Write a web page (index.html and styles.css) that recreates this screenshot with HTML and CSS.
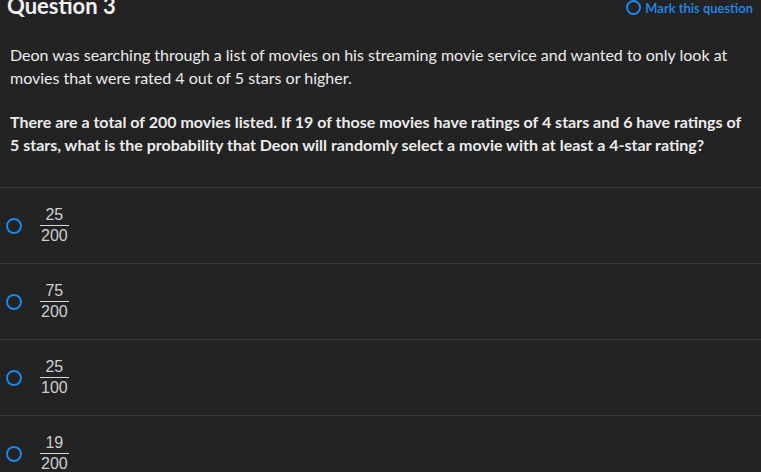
FILE: index.html
```html
<!DOCTYPE html>
<html>
<head>
<meta charset="utf-8">
<link rel="stylesheet" href="styles.css">
</head>
<body>
<div class="page">
  <header class="head">
    <h1 class="title">Question 3</h1>
    <a class="mark"><span class="mark-ring"></span>Mark this question</a>
  </header>
  <div class="stem">
    <p class="intro">Deon was searching through a list of movies on his streaming movie service and wanted to only look at movies that were rated 4 out of 5 stars or higher.</p>
    <p class="ask">There are a total of 200 movies listed. If 19 of those movies have ratings of 4 stars and 6 have ratings of 5 stars, what is the probability that Deon will randomly select a movie with at least a 4-star rating?</p>
  </div>
  <ul class="options">
    <li class="option"><span class="radio"></span><span class="frac"><span class="num">25</span><span class="den">200</span></span></li>
    <li class="option"><span class="radio"></span><span class="frac"><span class="num">75</span><span class="den">200</span></span></li>
    <li class="option"><span class="radio"></span><span class="frac"><span class="num">25</span><span class="den">100</span></span></li>
    <li class="option"><span class="radio"></span><span class="frac"><span class="num">19</span><span class="den">200</span></span></li>
  </ul>
</div>
</body>
</html>
```
FILE: styles.css
```css
html, body {
  margin: 0;
  padding: 0;
  background: #232323;
}
body {
  font-family: "Lato", "Open Sans", sans-serif;
  color: #ececec;
  overflow: hidden;
}
.page {
  width: 761px;
}
.head {
  display: flex;
  justify-content: space-between;
  align-items: flex-start;
  height: 16px;
}
.title {
  margin: -7px 0 0 7px;
  font-size: 22px;
  line-height: 26px;
  font-weight: 700;
  color: #f2f2f2;
}
.mark {
  display: flex;
  align-items: center;
  gap: 4px;
  margin: 0 8px 0 0;
  font-size: 13px;
  line-height: 14px;
  color: #1d8cf2;
  font-weight: 600;
}
.mark-ring {
  width: 11px;
  height: 11px;
  border: 2px solid #1d8cf2;
  border-radius: 50%;
}
.stem {
  padding: 27px 10px 0 10px;
}
.stem p {
  margin: 0 0 21px 0;
  font-size: 16px;
  line-height: 23px;
}
.stem p.ask {
  font-weight: 700;
  margin-bottom: 31px;
}
.options {
  list-style: none;
  margin: 0;
  padding: 0;
  border-top: 1px solid #363636;
}
.option {
  display: flex;
  align-items: center;
  height: 75px;
  border-bottom: 1px solid #363636;
  padding-left: 6px;
}
.radio {
  width: 12px;
  height: 12px;
  border: 2px solid #1a87e8;
  border-radius: 50%;
  margin-right: 18px;
}
.frac {
  display: inline-flex;
  flex-direction: column;
  align-items: center;
  font-family: "Liberation Sans", Arial, sans-serif;
  font-size: 16px;
  color: #cfcfcf;
  line-height: 18px;
}
.num {
  padding: 0 1px 1px;
  border-bottom: 1px solid #d8d8d8;
  align-self: stretch;
  text-align: center;
}
.den {
  padding: 1px 1px 0;
}
```
